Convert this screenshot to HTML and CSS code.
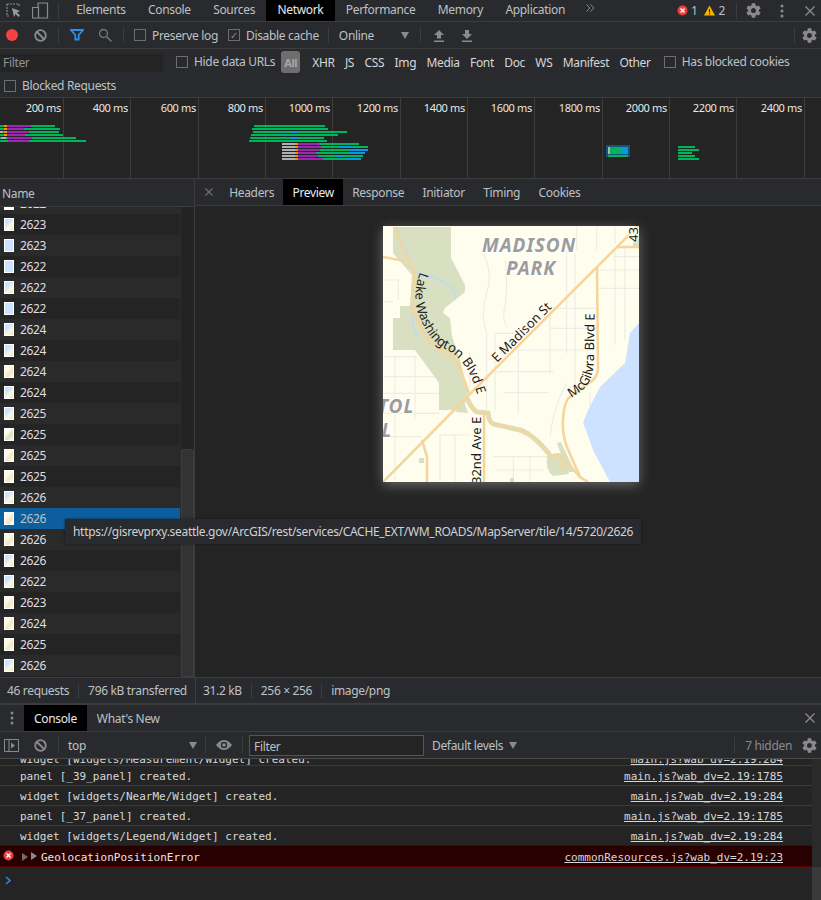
FILE: index.html
```html
<!DOCTYPE html>
<html lang="en">
<head>
    <meta charset="UTF-8">
    <title>DevTools Network</title>
    <link rel="stylesheet" href="styles.css">
</head>
<body>
<div class="devtools">
    <!-- main tab bar -->
    <div class="tabbar">
        <div class="tab-icons">
            <svg width="20" height="20" viewBox="0 0 20 20"><path d="M2 3H14V6M2 3V15H5" fill="none" stroke="#8a8a8a" stroke-width="1.200" stroke-dasharray="2 1"/><path d="M7 7l8 3-3 1.500 3 3-1.500 1.500-3-3-1.500 3z" fill="#9a9a9a"/></svg>
            <svg width="18" height="20" viewBox="0 0 18 20"><path d="M6 6V2H15.500V17H7M.5 6.500H6.500V17H.5z" fill="none" stroke="#8a8a8a" stroke-width="1.200"/></svg>
        </div>
        <div class="tab-sep"></div>
        <div class="tab">Elements</div>
        <div class="tab">Console</div>
        <div class="tab">Sources</div>
        <div class="tab active">Network</div>
        <div class="tab">Performance</div>
        <div class="tab">Memory</div>
        <div class="tab">Application</div>
        <svg class="more" width="9" height="8" viewBox="0 0 9 8"><path d="M.5.500l3.500 3.500-3.500 3.500M4.500.5l3.500 3.500-3.500 3.500" fill="none" stroke="#8a8a8a" stroke-width="1"/></svg>
        <div class="tabbar-right">
            <svg width="11" height="11" viewBox="0 0 11 11"><circle cx="5.500" cy="5.500" r="5" fill="#e8413f"/><path d="M3.500 3.500l4 4M7.500 3.500l-4 4" stroke="#fff" stroke-width="1.300"/></svg>
            <span class="count">1</span>
            <svg width="11" height="11" viewBox="0 0 11 11"><path d="M5.500 .5L11 10.500H0z" fill="#f4b400"/><path d="M5.500 4v3.500M5.500 8.300v1.200" stroke="#222" stroke-width="1"/></svg>
            <span class="count">2</span>
            <div class="tab-sep"></div>
            <svg width="15" height="15" viewBox="3 2.500 19.200 19"><use href="#gear"/></svg>
            <svg width="4" height="14" viewBox="0 0 4 14" class="dots"><circle cx="2" cy="2" r="1.500" fill="#8a8a8a"/><circle cx="2" cy="7" r="1.500" fill="#8a8a8a"/><circle cx="2" cy="12" r="1.500" fill="#8a8a8a"/></svg>
            <svg width="10" height="10" viewBox="0 0 10 10"><path d="M.5.500l9 9M9.500.5l-9 9" stroke="#8a8a8a" stroke-width="1.400"/></svg>
        </div>
    </div>

    <!-- network toolbar -->
    <div class="toolbar">
        <span class="record"></span>
        <svg class="block-icon" width="13" height="13" viewBox="0 0 13 13"><use href="#block"/></svg>
        <div class="tb-sep"></div>
        <svg class="funnel" width="14" height="12" viewBox="0 0 14 12"><path d="M1 1h12L8.700 6v4.500H5.300V6z" fill="none" stroke="#2f8ee8" stroke-width="1.800"/></svg>
        <svg class="search" width="14" height="14" viewBox="0 0 14 14"><circle cx="5.500" cy="5.500" r="4" fill="none" stroke="#777" stroke-width="1.300"/><path d="M8.500 8.500l5 5" stroke="#777" stroke-width="1.500"/></svg>
        <div class="tb-sep"></div>
        <label class="check"><span class="box"></span>Preserve log</label>
        <label class="check"><span class="box checked">✓</span>Disable cache</label>
        <div class="tb-sep short"></div>
        <div class="throttle">Online<span class="arrow"></span></div>
        <div class="tb-sep"></div>
        <svg class="up-icon" width="12" height="13" viewBox="0 0 12 13"><path d="M6 1l5 5H8v3.500H4V6H1zM1 11.500h10V13H1z" fill="#8a8a8a"/></svg>
        <svg class="down-icon" width="12" height="13" viewBox="0 0 12 13"><path d="M6 10L1 5h3V1h4v4h3zM1 11.500h10V13H1z" fill="#8a8a8a"/></svg>
        <div class="toolbar-end">
            <div class="tb-sep"></div>
            <svg width="15" height="15" viewBox="3 2.500 19.200 19"><use href="#gear"/></svg>
        </div>
    </div>

    <!-- filter rows -->
    <div class="filters">
        <div class="filter-row">
            <div class="filter-input">Filter</div>
            <label class="check hide-data"><span class="box"></span>Hide data URLs</label>
            <span class="pill">All</span>
            <span class="type first">XHR</span>
            <span class="type">JS</span>
            <span class="type">CSS</span>
            <span class="type">Img</span>
            <span class="type">Media</span>
            <span class="type">Font</span>
            <span class="type">Doc</span>
            <span class="type">WS</span>
            <span class="type">Manifest</span>
            <span class="type">Other</span>
            <label class="check cookies"><span class="box"></span>Has blocked cookies</label>
        </div>
        <div class="blocked-row">
            <label class="check"><span class="box"></span>Blocked Requests</label>
        </div>
    </div>

    <!-- timeline overview -->
    <svg class="overview" width="821" height="80" viewBox="0 98 821 80">
        <g stroke="#3d3d3d">
            <path d="M63.500 98V178M130.500 98V178M198.500 98V178M265.500 98V178M332.500 98V178M400.500 98V178M467.500 98V178M534.500 98V178M602.500 98V178M669.500 98V178M736.500 98V178M804.500 98V178"/>
        </g>
        <g class="ov-label" text-anchor="end">
            <text x="61" y="112">200 ms</text>
            <text x="128" y="112">400 ms</text>
            <text x="196" y="112">600 ms</text>
            <text x="263" y="112">800 ms</text>
            <text x="330" y="112">1000 ms</text>
            <text x="398" y="112">1200 ms</text>
            <text x="465" y="112">1400 ms</text>
            <text x="532" y="112">1600 ms</text>
            <text x="600" y="112">1800 ms</text>
            <text x="667" y="112">2000 ms</text>
            <text x="734" y="112">2200 ms</text>
            <text x="802" y="112">2400 ms</text>
        </g>
        <!-- first burst -->
        <g fill="#00b35c">
            <rect x="0" y="125" width="55" height="2"/>
            <rect x="0" y="128" width="60" height="2"/>
            <rect x="0" y="131" width="59" height="2"/>
            <rect x="0" y="134" width="63" height="2"/>
            <rect x="0" y="137" width="76" height="2"/>
            <rect x="0" y="140" width="86" height="2"/>
        </g>
        <g fill="#9c27b0">
            <rect x="7" y="125" width="24" height="2"/>
            <rect x="7" y="128" width="17" height="2"/>
            <rect x="7" y="131" width="22" height="2"/>
            <rect x="7" y="134" width="18" height="2"/>
            <rect x="8" y="137" width="24" height="2"/>
            <rect x="8" y="140" width="21" height="2"/>
        </g>
        <g fill="#f09300">
            <rect x="4" y="125" width="3" height="2"/>
            <rect x="4" y="128" width="3" height="2"/>
            <rect x="4" y="131" width="3" height="2"/>
            <rect x="4" y="134" width="3" height="2"/>
        </g>
        <g fill="#b0b0b0">
            <rect x="0" y="131" width="3" height="2"/>
            <rect x="1" y="137" width="5" height="2"/>
        </g>
        <!-- second burst -->
        <g fill="#00b35c">
            <rect x="254" y="125" width="71" height="2"/>
            <rect x="252" y="128" width="76" height="2"/>
            <rect x="253" y="131" width="94" height="2"/>
            <rect x="251" y="134" width="87" height="2"/>
            <rect x="250" y="137" width="74" height="2"/>
            <rect x="249" y="140" width="78" height="2"/>
            <rect x="298" y="143" width="61" height="2"/>
            <rect x="298" y="146" width="70" height="2"/>
            <rect x="298" y="149" width="70" height="2"/>
            <rect x="298" y="152" width="67" height="2"/>
            <rect x="298" y="155" width="65" height="2"/>
            <rect x="298" y="158" width="63" height="2"/>
        </g>
        <g fill="#039be5">
            <rect x="291" y="131" width="6" height="2"/>
            <rect x="282" y="134" width="4" height="2"/>
            <rect x="290" y="137" width="7" height="2"/>
            <rect x="340" y="146" width="14" height="2"/>
            <rect x="349" y="149" width="19" height="2"/>
            <rect x="349" y="152" width="16" height="2"/>
            <rect x="336" y="155" width="7" height="2"/>
            <rect x="346" y="158" width="15" height="2"/>
        </g>
        <g fill="#b0b0b0">
            <rect x="282" y="143" width="13" height="2"/>
            <rect x="282" y="146" width="13" height="2"/>
            <rect x="282" y="149" width="13" height="2"/>
            <rect x="282" y="152" width="13" height="2"/>
            <rect x="282" y="155" width="13" height="2"/>
            <rect x="282" y="158" width="13" height="2"/>
        </g>
        <g fill="#f09300">
            <rect x="295" y="143" width="3" height="2"/>
            <rect x="295" y="146" width="3" height="2"/>
            <rect x="295" y="149" width="3" height="2"/>
            <rect x="295" y="152" width="3" height="2"/>
            <rect x="295" y="155" width="3" height="2"/>
            <rect x="295" y="158" width="3" height="2"/>
        </g>
        <g fill="#9c27b0">
            <rect x="298" y="143" width="21" height="2"/>
            <rect x="298" y="146" width="23" height="2"/>
            <rect x="298" y="149" width="22" height="2"/>
            <rect x="298" y="152" width="18" height="2"/>
            <rect x="298" y="155" width="20" height="2"/>
            <rect x="298" y="158" width="25" height="2"/>
        </g>
        <!-- third and fourth bursts -->
        <rect x="606" y="145" width="24" height="12" fill="#17507c"/>
        <rect x="608" y="147" width="20" height="7" fill="#039be5"/>
        <rect x="609" y="147" width="13" height="7" fill="#00b35c"/>
        <rect x="608" y="147" width="2" height="7" fill="#b0b0b0"/>
        <rect x="608" y="155" width="20" height="2" fill="#00b35c"/>
        <g fill="#00b35c">
            <rect x="678" y="146" width="17" height="2"/>
            <rect x="678" y="149" width="21" height="2"/>
            <rect x="678" y="152" width="14" height="2"/>
            <rect x="678" y="155" width="17" height="2"/>
            <rect x="678" y="158" width="21" height="2"/>
        </g>
    </svg>

    <!-- requests and preview -->
    <div class="split">
        <div class="requests">
            <div class="name-header">Name</div>
            <div class="rows-wrap">
                <div class="rows">
                    <div class="row cut"><span class="thumb"></span>2622</div>
                    <div class="row"><span class="thumb mix"></span>2623</div>
                    <div class="row"><span class="thumb water"></span>2623</div>
                    <div class="row"><span class="thumb water"></span>2622</div>
                    <div class="row"><span class="thumb mix"></span>2622</div>
                    <div class="row"><span class="thumb water"></span>2622</div>
                    <div class="row"><span class="thumb mix"></span>2624</div>
                    <div class="row"><span class="thumb mix"></span>2624</div>
                    <div class="row"><span class="thumb tan"></span>2624</div>
                    <div class="row"><span class="thumb mix"></span>2624</div>
                    <div class="row"><span class="thumb mix"></span>2625</div>
                    <div class="row"><span class="thumb green"></span>2625</div>
                    <div class="row"><span class="thumb tan"></span>2625</div>
                    <div class="row"><span class="thumb tan"></span>2625</div>
                    <div class="row"><span class="thumb mix"></span>2626</div>
                    <div class="row selected"><span class="thumb tan"></span>2626</div>
                    <div class="row"><span class="thumb tan"></span>2626</div>
                    <div class="row"><span class="thumb mix"></span>2626</div>
                    <div class="row"><span class="thumb mix"></span>2622</div>
                    <div class="row"><span class="thumb tan"></span>2623</div>
                    <div class="row"><span class="thumb tan"></span>2624</div>
                    <div class="row"><span class="thumb tan"></span>2625</div>
                    <div class="row"><span class="thumb mix"></span>2626</div>
                </div>
                <div class="scrollbar"><div class="scroll-thumb"></div></div>
            </div>
        </div>
        <div class="preview">
            <div class="preview-tabs">
                <svg class="preview-close" width="8" height="8" viewBox="0 0 8 8"><path d="M.5.500l7 7M7.500.5l-7 7" stroke="#6e6e6e" stroke-width="1.200"/></svg>
                <div class="ptab">Headers</div>
                <div class="ptab active">Preview</div>
                <div class="ptab">Response</div>
                <div class="ptab">Initiator</div>
                <div class="ptab">Timing</div>
                <div class="ptab">Cookies</div>
            </div>
            <div class="preview-body">
                <svg class="map" width="256" height="256" viewBox="0 0 256 256">
                    <defs>
                        <path id="lake-wa" d="M37 46C31 62 31 80 37 92C43 106 50 116 60 122C78 130 88 144 96 174"/>
                        <path id="mcgilvra" d="M188 172C202 164 211 156 211 132L212 60"/>
                    </defs>
                    <rect width="256" height="256" fill="#fffeee"/>
                    <!-- street grid, drawn at 3x -->
                    <g transform="translate(-3 -6) scale(.3333)" fill="none" stroke="#edece6" stroke-width="3.500">
                        <path d="M10 180H55V240M10 245H40M10 410H110M10 470H170M10 520H180M10 580H180M45 410V780M105 410V600M10 650H125M175 645H270M180 645V785M225 645V785"/>
                        <path d="M310 100Q340 160 320 220Q300 280 320 340V585M375 120Q385 190 375 260Q365 290 380 320M270 400V500M345 340H420M345 340V570M415 320V580"/>
                        <path d="M370 518H505M345 455H520M415 390H640M510 325H650M510 265H650M560 90V400M585 100V500M510 270V460M705 85V375M735 85V360M650 205H777M650 150H777M700 110H777M740 375H760"/>
                        <path d="M340 710H500M400 710V785M450 710V785M345 750H490M560 490Q520 560 510 650M630 520V560"/>
                        <path d="M590 20V90M650 20V90M705 20V70"/>
                    </g>
                    <!-- park -->
                    <path d="M10 1H68V32L82 59V66L62 82L60 87L67 92L69 110L77 134L85 167L80 184H56V157L32 124H10V92H17V80H27L29 49L10 27Z" fill="#d8e0c1"/>
                    <path d="M72 186L82 178L85 187Z" fill="#d8e0c1"/>
                    <path d="M164 230Q178 224 180 230L186 248L170 250Q162 244 164 230Z" fill="#d8e0c1"/>
                    <path d="M174 217L178 216L192 246H184Z" fill="#d8e0c1"/>
                    <rect x="250" y="9" width="6" height="12" fill="#d8e0c1"/>
                    <rect x="36" y="232" width="5" height="5" fill="#d8e0c1"/>
                    <rect x="127" y="252" width="4" height="4" fill="#d8e0c1"/>
                    <!-- lake -->
                    <path d="M256 97L247 107L245 119L242 137L217 161L205 184L200 197L204 207L210 224L227 256H256Z" fill="#cde2ff"/>
                    <!-- creek -->
                    <path d="M14 1Q16 14 24 24Q24 40 38 50Q56 50 62 58Q74 60 72 74M29 88Q28 100 36 112" fill="none" stroke="#bcdcf2" stroke-width="1.500"/>
                    <!-- green strip under the boulevard -->
                    <path d="M84 172Q88 182 94 186L105 187Q106 196 110 198L137 204Q150 208 167 229" fill="none" stroke="#d8e0c1" stroke-width="5"/>
                    <!-- roads -->
                    <g fill="none" stroke="#f4d59c" stroke-width="2.600">
                        <path d="M0 256L84 171L94 161L256 -1"/>
                        <path d="M234 21H256"/>
                        <path d="M214 42L215 144Q214 150 210 154L187 171Q181 175 180 194Q179 208 184 221L197 251L205 256"/>
                        <path d="M12 1L20 24L32 47Q29 60 29 81Q36 100 47 117Q62 124 72 134Q78 142 80 151L86 167"/>
                        <path d="M84 172Q88 182 94 186L105 187Q106 196 110 198L137 204Q150 208 167 229L179 230L180 241L177 244L184 236L189 242L197 251"/>
                        <path d="M0 31L22 35"/>
                        <path d="M101 187V256"/>
                        <path d="M39 214L44 231V256"/>
                    </g>
                    <text class="map-street on-path"><textPath href="#lake-wa">Lake Washington Blvd E</textPath></text>
                    <text class="map-street" transform="translate(114 137) rotate(-45)">E Madison St</text>
                    <text class="map-street on-path"><textPath href="#mcgilvra">McGilvra Blvd E</textPath></text>
                    <text class="map-street" transform="translate(98 258) rotate(-90)">32nd Ave E</text>
                    <text class="map-street" transform="translate(255 16) rotate(-90)">43</text>
                    <g class="map-area" text-anchor="middle">
                        <text x="146" y="26">MADISON</text>
                        <text x="148" y="49">PARK</text>
                        <text x="13" y="187">TOL</text>
                        <text x="4" y="211">L</text>
                    </g>
                </svg>
            </div>
        </div>
    </div>

    <!-- status bar -->
    <div class="statusbar">
        <div class="status-left">
            <span class="stat">46 requests</span>
            <span class="stat-sep"></span>
            <span class="stat">796 kB transferred</span>
        </div>
        <div class="status-right">
            <span class="stat">31.2 kB</span>
            <span class="stat-sep"></span>
            <span class="stat">256 × 256</span>
            <span class="stat-sep"></span>
            <span class="stat">image/png</span>
        </div>
    </div>

    <!-- console drawer -->
    <div class="drawer-tabs">
        <svg class="drawer-dots" width="4" height="14" viewBox="0 0 4 14"><circle cx="2" cy="2" r="1.500" fill="#8a8a8a"/><circle cx="2" cy="7" r="1.500" fill="#8a8a8a"/><circle cx="2" cy="12" r="1.500" fill="#8a8a8a"/></svg>
        <div class="dtab active">Console</div>
        <div class="dtab">What's New</div>
        <svg class="drawer-close" width="10" height="10" viewBox="0 0 10 10"><path d="M.5.500l9 9M9.500.5l-9 9" stroke="#8a8a8a" stroke-width="1.400"/></svg>
    </div>
    <div class="console-toolbar">
        <svg class="sidebar-icon" width="15" height="13" viewBox="0 0 15 13"><path d="M.5.500h14v12H.5zM5 .5v12" fill="none" stroke="#8a8a8a"/><path d="M7 3.500l4 3-4 3z" fill="#8a8a8a"/></svg>
        <svg class="block-icon" width="13" height="13" viewBox="0 0 13 13"><use href="#block"/></svg>
        <div class="tb-sep"></div>
        <div class="context">top<span class="arrow"></span></div>
        <div class="tb-sep"></div>
        <svg class="eye" width="16" height="10" viewBox="0 0 16 10"><path d="M0 5Q8-5 16 5Q8 15 0 5Z" fill="#8a8a8a"/><circle cx="8" cy="5" r="3.200" fill="#2a2b2e"/><circle cx="8" cy="5" r="1.800" fill="#8a8a8a"/></svg>
        <div class="tb-sep"></div>
        <div class="console-filter">Filter</div>
        <div class="levels">Default levels<span class="arrow"></span></div>
        <div class="toolbar-end">
            <div class="tb-sep"></div>
            <span class="hidden-count">7 hidden</span>
            <svg width="15" height="15" viewBox="3 2.500 19.200 19"><use href="#gear"/></svg>
        </div>
    </div>
    <div class="console-wrap">
        <div class="messages">
            <div class="msg cut-msg"><span>widget [widgets/Measurement/Widget] created.</span><a>main.js?wab_dv=2.19:284</a></div>
            <div class="msg"><span>panel [_39_panel] created.</span><a>main.js?wab_dv=2.19:1785</a></div>
            <div class="msg"><span>widget [widgets/NearMe/Widget] created.</span><a>main.js?wab_dv=2.19:284</a></div>
            <div class="msg"><span>panel [_37_panel] created.</span><a>main.js?wab_dv=2.19:1785</a></div>
            <div class="msg"><span>widget [widgets/Legend/Widget] created.</span><a>main.js?wab_dv=2.19:284</a></div>
            <div class="msg error">
                <svg class="err-icon" width="11" height="11" viewBox="0 0 11 11"><circle cx="5.500" cy="5.500" r="5" fill="#e8413f"/><path d="M3.500 3.500l4 4M7.500 3.500l-4 4" stroke="#fff" stroke-width="1.300"/></svg>
                <span class="tri low"></span><span class="tri"></span>
                <span>GeolocationPositionError</span>
                <a>commonResources.js?wab_dv=2.19:23</a>
            </div>
            <div class="prompt">
                <svg width="7" height="9" viewBox="0 0 7 9"><path d="M1 1l4 3.500L1 8" fill="none" stroke="#3b82f0" stroke-width="1.600"/></svg>
            </div>
        </div>
        <div class="console-scroll"><div class="console-thumb"></div></div>
    </div>

    <div class="tooltip">https://gisrevprxy.seattle.gov/ArcGIS/rest/services/CACHE_EXT/WM_ROADS/MapServer/tile/14/5720/2626</div>
</div>

<svg width="0" height="0" class="defs">
    <defs>
        <g id="gear"><path fill="#8a8a8a" fill-rule="evenodd" d="M19.400 13a7.500 7.500 0 0 0 0-2l2.300-1.700-2.200-3.800-2.600 1.100a7.500 7.500 0 0 0-1.700-1L14.800 2.800h-4.400L10 5.600a7.500 7.500 0 0 0-1.700 1L5.700 5.500 3.500 9.300 5.800 11a7.500 7.500 0 0 0 0 2l-2.300 1.700 2.200 3.800 2.600-1.100a7.500 7.500 0 0 0 1.700 1l.4 2.800h4.400l.4-2.800a7.500 7.500 0 0 0 1.700-1l2.600 1.100 2.200-3.800zM12.600 15.200a3.200 3.200 0 1 1 0-6.400 3.200 3.200 0 0 1 0 6.400z"/></g>
        <g id="block"><circle cx="6.500" cy="6.500" r="5.300" fill="none" stroke="#8a8a8a" stroke-width="1.800"/><path d="M3 3l7 7" stroke="#8a8a8a" stroke-width="1.800"/></g>
    </defs>
</svg>
</body>
</html>
```

FILE: styles.css
```css
* {
    box-sizing: border-box;
}

html, body {
    margin: 0;
    padding: 0;
    background-color: #242424;
}

body {
    width: 821px;
    height: 900px;
    overflow: hidden;
    font-family: "Noto Sans", sans-serif;
    font-size: 12px;
    letter-spacing: -.33px;
    color: #bdc1c6;
}

.devtools {
    position: relative;
    width: 821px;
    height: 900px;
    display: flex;
    flex-direction: column;
}

.defs {
    position: absolute;
}

/* main tab bar */
.tabbar {
    height: 22px;
    flex: none;
    display: flex;
    align-items: center;
    background-color: #292a2d;
    border-bottom: 1px solid #3d3d3d;
}

.tab-icons {
    display: flex;
    align-items: center;
    gap: 7px;
    padding-left: 5px;
    width: 58px;
}

.tab-sep {
    width: 1px;
    height: 16px;
    margin-right: 6px;
    background-color: #3d3d3d;
}

.tab {
    height: 21px;
    line-height: 19px;
    padding: 0 11.200px;
}

.tab.active {
    background-color: #000;
    color: #e8eaed;
}

.more {
    margin-left: 10px;
    margin-bottom: 5px;
}

.tabbar-right {
    margin-left: auto;
    display: flex;
    align-items: center;
    padding-right: 6px;
}

.count {
    margin: 0 7px 0 3px;
}

.tabbar-right .tab-sep {
    margin: 0 9px 0 4px;
}

.dots {
    margin: 0 21px 0 19px;
}

/* toolbars */
.toolbar {
    height: 27px;
    flex: none;
    display: flex;
    align-items: center;
    background-color: #292a2d;
    border-bottom: 1px solid #3d3d3d;
}

.record {
    width: 12px;
    height: 12px;
    margin-left: 6px;
    border-radius: 50%;
    background-color: #f44242;
}

.block-icon {
    margin-left: 16px;
}

.tb-sep {
    width: 1px;
    height: 16px;
    flex: none;
    background-color: #3d3d3d;
}

.toolbar .block-icon + .tb-sep {
    margin: 0 11px;
}

.search {
    margin-left: 14px;
}

.search + .tb-sep {
    margin: 0 10px 0 11px;
}

.check {
    display: flex;
    align-items: center;
    white-space: nowrap;
    color: #bdc1c6;
}

.box {
    width: 12px;
    height: 12px;
    margin-right: 6px;
    border: 1px solid #6e6e6e;
    font-size: 10px;
    line-height: 10px;
    text-align: center;
    color: #8a8a8a;
}

.check + .check {
    margin-left: 10px;
}

.tb-sep.short {
    margin: 0 10px 0 9px;
}

.throttle {
    width: 81px;
    display: flex;
    justify-content: space-between;
    align-items: center;
    padding-right: 11px;
}

.arrow {
    width: 0;
    height: 0;
    border-left: 4px solid transparent;
    border-right: 4px solid transparent;
    border-top: 7px solid #8a8a8a;
}

.up-icon {
    margin-left: 12px;
}

.down-icon {
    margin-left: 16px;
}

.toolbar-end {
    margin-left: auto;
    display: flex;
    align-items: center;
    gap: 7px;
    padding-right: 4px;
}

/* filter rows */
.filters {
    height: 49px;
    flex: none;
    background-color: #292a2d;
    border-bottom: 1px solid #3d3d3d;
}

.filter-row {
    height: 25px;
    display: flex;
    align-items: center;
}

.filter-input {
    width: 163px;
    height: 18px;
    margin-top: 2px;
    padding-left: 3px;
    line-height: 17px;
    background-color: #242424;
    color: #8f9296;
}

.hide-data {
    margin-left: 13px;
}

.pill {
    width: 19px;
    height: 22px;
    margin-left: 6px;
    border-radius: 3px;
    background-color: #6e6e6e;
    color: #a6a6a6;
    line-height: 23px;
    text-align: center;
    font-weight: 700;
    font-size: 11px;
}

.type {
    margin-left: 10.300px;
    margin-top: 2px;
    color: #d5d7da;
}

.type.first {
    margin-left: 12px;
}

.cookies {
    margin-left: 13px;
}

.blocked-row {
    height: 23px;
    display: flex;
    align-items: center;
    padding-left: 4px;
}

/* timeline overview */
.overview {
    display: block;
    flex: none;
    height: 81px;
    background-color: #242424;
    border-bottom: 1px solid #3d3d3d;
}

.ov-label {
    font-family: "Noto Sans", sans-serif;
    font-size: 11px;
    fill: #e8e8e8;
}

/* requests and preview */
.split {
    height: 498px;
    flex: none;
    display: flex;
}

.requests {
    width: 195px;
    flex: none;
    display: flex;
    flex-direction: column;
    border-right: 1px solid #3d3d3d;
}

.name-header {
    height: 28px;
    flex: none;
    padding-left: 2px;
    line-height: 29px;
    background-color: #292a2d;
    border-bottom: 1px solid #3d3d3d;
}

.rows-wrap {
    flex: 1;
    display: flex;
    overflow: hidden;
}

.rows {
    width: 180px;
    flex: none;
}

.row {
    height: 21px;
    display: flex;
    align-items: center;
    padding-left: 4px;
    color: #dcdee0;
    background-color: #242424;
}

.row:nth-child(odd) {
    background-color: #2a2a2a;
}

.row.cut {
    margin-top: -14px;
}

.row.selected {
    background-color: #0c5f9c;
    color: #bdc1c6;
}

.thumb {
    width: 10px;
    height: 13px;
    margin-right: 6px;
    background-color: #fff;
    border: 1px solid #fff;
}

.thumb.water {
    background-color: #cde2ff;
}

.thumb.mix {
    background: linear-gradient(135deg, #cde2ff 30%, #fbf6e0 65%, #e8e6cf);
}

.thumb.tan {
    background: linear-gradient(135deg, #fdf8e4 35%, #efe6c6 65%, #fffeee);
}

.thumb.green {
    background: linear-gradient(135deg, #fffeee 30%, #d8e0c1 60%, #fdf8e4);
}

.scrollbar {
    width: 14px;
    flex: none;
    display: flex;
    flex-direction: column;
    justify-content: flex-end;
    background-color: #232323;
    border-left: 1px solid #2b2b2b;
}

.scroll-thumb {
    height: 228px;
    background-color: #333;
    border: 1px solid #3d3d3d;
    border-top-left-radius: 2px;
    border-top-right-radius: 2px;
}

.preview {
    flex: 1;
    display: flex;
    flex-direction: column;
    min-width: 0;
}

.preview-tabs {
    height: 27px;
    flex: none;
    display: flex;
    align-items: center;
    padding-left: 10px;
    background-color: #292a2d;
    border-bottom: 1px solid #3d3d3d;
}

.preview-close {
    margin-right: 7px;
}

.ptab {
    height: 26px;
    line-height: 27px;
    padding: 0 9.200px;
}

.ptab.active {
    background-color: #000;
    color: #e8eaed;
}

.preview-body {
    flex: 1;
    padding: 20px 0 0 188px;
}

.map {
    display: block;
    box-shadow: 0 3px 12px rgba(255, 255, 255, .32);
}

.map-street {
    font-family: "Noto Sans", sans-serif;
    font-size: 13px;
    letter-spacing: 0;
    fill: #1d1d1d;
    stroke: #fffeee;
    stroke-width: 2px;
    paint-order: stroke;
}

.map-street.on-path {
    stroke: none;
}

.map-area {
    font-family: "Noto Sans", sans-serif;
    font-size: 19px;
    font-weight: 700;
    font-style: italic;
    fill: #9c9c9c;
    letter-spacing: 1px;
    stroke: #fff;
    stroke-width: 2px;
    paint-order: stroke;
}

/* status bar */
.statusbar {
    height: 26px;
    flex: none;
    display: flex;
    white-space: nowrap;
    background-color: #292a2d;
    border-top: 1px solid #3d3d3d;
}

.status-left {
    width: 196px;
    flex: none;
    display: flex;
    align-items: center;
    padding-left: 7px;
    border-right: 1px solid #3d3d3d;
}

.status-right {
    display: flex;
    align-items: center;
    padding-left: 7px;
}

.stat-sep {
    width: 1px;
    height: 14px;
    margin: 0 9px;
    background-color: #3d3d3d;
}

/* console drawer */
.drawer-tabs {
    height: 29px;
    flex: none;
    display: flex;
    align-items: center;
    background-color: #292a2d;
    border-top: 2px solid #3d3d3d;
    border-bottom: 1px solid #3d3d3d;
}

.drawer-dots {
    margin: 0 10px;
}

.dtab {
    height: 26px;
    line-height: 28px;
    padding: 0 10px;
}

.dtab.active {
    background-color: #000;
    color: #e8eaed;
}

.drawer-close {
    margin-left: auto;
    margin-right: 6px;
}

.console-toolbar {
    height: 27px;
    flex: none;
    display: flex;
    align-items: center;
    background-color: #292a2d;
    border-bottom: 1px solid #4a4a4a;
}

.sidebar-icon {
    margin-left: 4px;
}

.console-toolbar .block-icon {
    margin-left: 15px;
}

.console-toolbar .block-icon + .tb-sep {
    margin: 0 9px 0 11px;
}

.context {
    width: 137px;
    display: flex;
    justify-content: space-between;
    align-items: center;
    padding-right: 8px;
}

.context + .tb-sep {
    margin-right: 10px;
}

.eye + .tb-sep {
    margin: 0 6px 0 10px;
}

.console-filter {
    width: 175px;
    height: 21px;
    padding-left: 4px;
    line-height: 21px;
    border: 1px solid #555;
    background-color: #242424;
}

.levels {
    display: flex;
    align-items: center;
    gap: 6px;
    margin-left: 8px;
}

.hidden-count {
    margin: 0 3px 0 3px;
    color: #8a8a8a;
}

.console-wrap {
    flex: 1;
    display: flex;
    overflow: hidden;
    background-color: #242424;
}

.messages {
    flex: 1;
    min-width: 0;
}

.msg {
    height: 20px;
    display: flex;
    align-items: center;
    padding: 2px 29px 0 20px;
    border-bottom: 1px solid #3a3a3a;
    font-family: "DejaVu Sans Mono", monospace;
    font-size: 11px;
    letter-spacing: 0;
    color: #d5d7da;
    white-space: nowrap;
}

.msg a {
    margin-left: auto;
    text-decoration: underline;
    color: #d5d7da;
}

.msg.cut-msg {
    height: 7px;
    padding-top: 0;
    line-height: 1;
    align-items: flex-end;
    overflow: hidden;
}

.msg.error {
    position: relative;
    height: 22px;
    border-top: 1px solid #5c0000;
    border-bottom: 1px solid #5c0000;
    background-color: #290000;
    margin-top: -1px;
    padding-left: 41px;
    color: #e8e8e8;
}

.err-icon {
    position: absolute;
    left: 3px;
    top: 4px;
}

.tri {
    position: absolute;
    left: 31px;
    top: 6px;
    border-left: 6px solid #8a8a8a;
    border-top: 4px solid transparent;
    border-bottom: 4px solid transparent;
}

.tri.low {
    left: 22px;
    top: 7px;
    border-left-color: #6e6e6e;
}

.prompt {
    padding: 5px 0 0 5px;
}

.console-scroll {
    width: 9px;
    flex: none;
    display: flex;
    flex-direction: column;
    justify-content: flex-end;
    background-color: #2a2a2a;
}

.console-thumb {
    height: 33px;
    background-color: #3a3a3a;
}

/* url tooltip */
.tooltip {
    position: absolute;
    left: 65px;
    top: 519px;
    height: 25px;
    padding: 0 8px;
    line-height: 25px;
    letter-spacing: -.31px;
    background-color: #292a2d;
    box-shadow: 0 0 2px rgba(0, 0, 0, .6);
    color: #d0d2d5;
    white-space: nowrap;
}
```
